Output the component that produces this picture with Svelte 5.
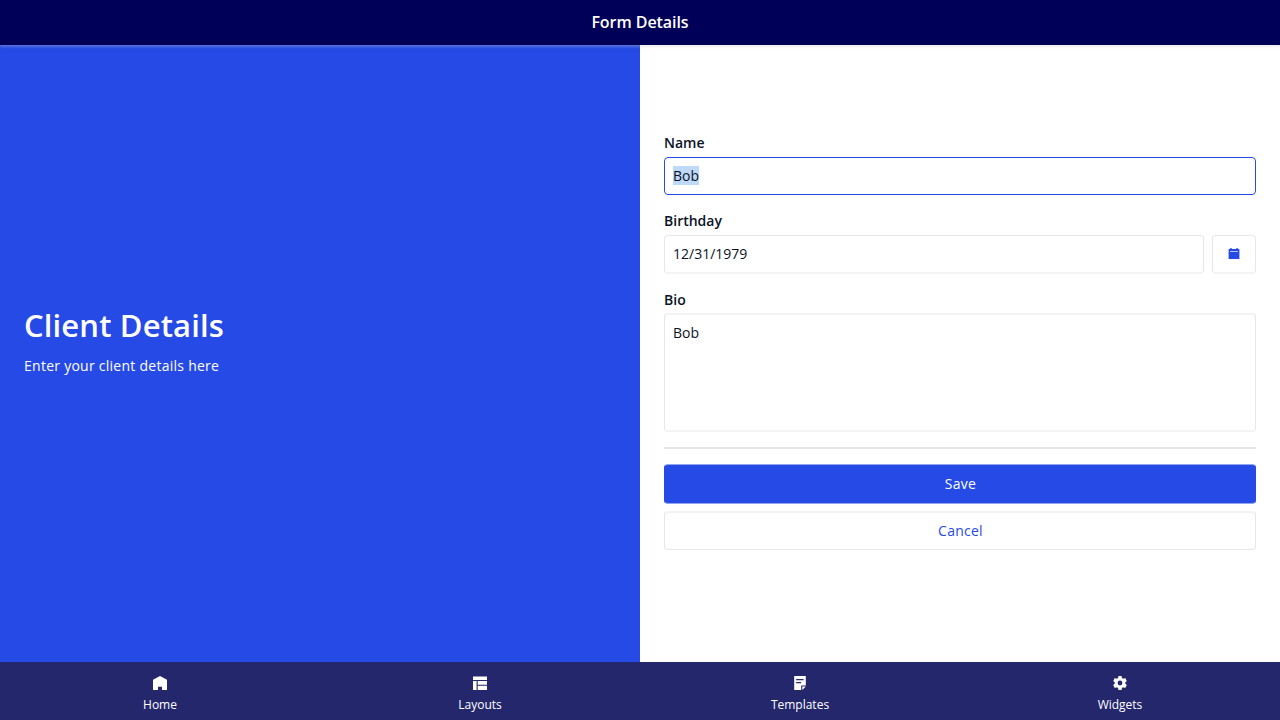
<script>
  let name = $state('Bob');
  let birthday = $state('12/31/1979');
  let bio = $state('Bob');
</script>

<div class="page">
  <header><h1>Form Details</h1></header>
  <main>
    <section class="intro">
      <h2>Client Details</h2>
      <p>Enter your client details here</p>
    </section>
    <section class="form">
      <div class="group">
        <span class="label">Name</span>
        <div class="control active"><span class="selected">{name}</span></div>
      </div>
      <div class="group birthday">
        <span class="label">Birthday</span>
        <div class="date">
          <div class="control">{birthday}</div>
          <button class="picker" aria-label="Pick a date">
            <svg width="14" height="14" viewBox="0 0 14 14">
              <path fill="#264ae5" d="M2.1 2h1.2V1h1.4v1h4.6V1h1.4v1h1.2q.5 0 .5.5v9.1q0 .5-.5.5H2.1q-.5 0-.5-.5V2.5q0-.5.5-.5z" />
              <path fill="#b5c1f7" d="M3 4h8v1H3z" />
            </svg>
          </button>
        </div>
      </div>
      <div class="group bio">
        <span class="label">Bio</span>
        <div class="control area">{bio}</div>
      </div>
      <hr />
      <button class="btn primary">Save</button>
      <button class="btn cancel">Cancel</button>
    </section>
  </main>
  <nav>
    <div class="tab">
      <svg width="14" height="14" viewBox="0 0 14 14"><path d="M7 0l7 3.7V14H9v-3.2H5V14H0V3.7z" /></svg>
      <span>Home</span>
    </div>
    <div class="tab">
      <svg width="14" height="14" viewBox="0 0 14 14"><path d="M0 .4h14v3.5H0zM0 5h3.6v9H0zM4.7 5H14v3.7H4.7zM4.7 9.8H14V14H4.7z" /></svg>
      <span>Layouts</span>
    </div>
    <div class="tab">
      <svg width="14" height="14" viewBox="0 0 14 14"><path fill-rule="evenodd" d="M1.2 0h11.6v9.4H8.2V14h-7zM3.2 3v1.3h7.4V3zM3.2 6v1.3h4.9V6zM9.3 10.4h3.5L9.3 14z" /></svg>
      <span>Templates</span>
    </div>
    <div class="tab">
      <svg width="14" height="15" viewBox="0 0 14 14"><path fill-rule="evenodd" d="M5.5 0h3l.5 2.1 1.1.6 2.1-.7L13.8 4.9 12.3 6.3v1.4l1.5 1.4-1.6 2.9-2.1-.7-1.1.6-.5 2.1h-3l-.5-2.1-1.1-.6-2.1.7L.2 9.1l1.5-1.4V6.3L.2 4.9 1.8 2l2.1.7L5 2.1zM7 4.6a2.4 2.4 0 1 0 0 4.8 2.4 2.4 0 0 0 0-4.8z" /></svg>
      <span>Widgets</span>
    </div>
  </nav>
</div>

<style>
  :global(body) { margin: 0; }
  .page {
    height: 720px;
    display: grid;
    grid-template-rows: 45px 1fr 58px;
    font: 14px/20px 'Open Sans', sans-serif;
    color: #0a1325;
    background: #fff;
  }
  header {
    display: flex;
    align-items: center;
    justify-content: center;
    padding-bottom: 2px;
    box-sizing: border-box;
    background: #000058;
    box-shadow: 0 2px 2px rgba(194, 196, 201, 0.3);
    z-index: 1;
  }
  h1 { margin: 0; font-size: 16px; line-height: 24px; font-weight: 600; letter-spacing: -0.06px; color: #fff; }
  main { display: grid; grid-template-columns: 1fr 1fr; }
  .intro {
    display: flex;
    flex-direction: column;
    justify-content: center;
    padding: 0 24px 26px;
    background: #264ae5;
    color: #fff;
  }
  h2 { margin: 0 0 11px; font-size: 31px; line-height: 40px; font-weight: 600; letter-spacing: 0.14px; }
  p { margin: 0; letter-spacing: 0.26px; }
  .form { padding: 88px 24px 0; display: flex; flex-direction: column; }
  .group { margin-bottom: 16px; }
  .label { display: block; font-weight: 600; line-height: 20px; margin-bottom: 4px; }
  .control {
    box-sizing: border-box;
    height: 38px;
    padding: 8px;
    border: 1px solid #e7e7e9;
    border-radius: 4px;
    flex: 1;
  }
  .active { border-color: #264ae5; }
  .selected { background: #bfd9f8; }
  .date { display: flex; gap: 8px; height: 39px; }
  .date .control { height: 39px; border-bottom: 2px solid #f3f3f4; }
  .bio .label { margin-bottom: 3px; }
  .bio { margin-bottom: 15px; }
  .area { height: 119px; border-top: 2px solid #f3f3f4; border-bottom: 2px solid #f3f3f4; }
  .picker {
    width: 44px;
    padding: 0;
    display: grid;
    place-items: center;
    border: 1px solid #e7e7e9;
    border-bottom: 2px solid #f3f3f4;
    border-radius: 4px;
    background: #fff;
  }
  hr { width: 100%; height: 2px; margin: 0 0 15px; border: 0; background: #e5e5e6; }
  .btn {
    box-sizing: border-box;
    padding: 0 0 0 1px;
    border: 1px solid #e7e7e9;
    border-radius: 4px;
    background: #fff;
    color: #264ae5;
    font: inherit;
    letter-spacing: 0.26px;
  }
  .primary { height: 40px; margin-bottom: 7px; background: #264ae5; border-color: #92a4f2 #264ae5; color: #fff; }
  .cancel { height: 39px; border-top: 2px solid #f3f3f4; }
  nav { display: grid; grid-template-columns: repeat(4, 1fr); background: #24276c; color: #fff; }
  .tab {
    display: flex;
    flex-direction: column;
    align-items: center;
    padding-top: 14px;
    font-size: 12px;
    line-height: 18px;
    gap: 6px;
  }
  .tab svg { height: 14px; fill: #fff; }
</style>
